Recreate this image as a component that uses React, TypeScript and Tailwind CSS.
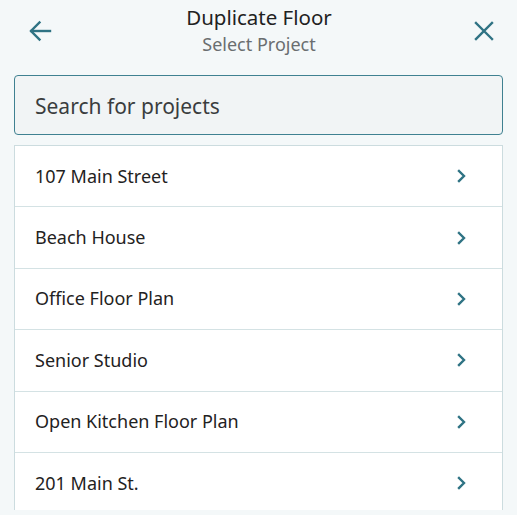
import React from "react"

const projects = [
    "107 Main Street",
    "Beach House",
    "Office Floor Plan",
    "Senior Studio",
    "Open Kitchen Floor Plan",
    "201 Main St.",
]

function BackArrow() {
    return (
        <svg width="24" height="24" viewBox="0 0 24 24" fill="none" stroke="#2f7384" strokeWidth="2.4" strokeLinecap="square">
            <path d="M22 12H3.5" />
            <path d="M11.5 3.5L3 12l8.5 8.5" />
        </svg>
    )
}

function CloseIcon() {
    return (
        <svg width="20" height="20" viewBox="0 0 20 20" fill="none" stroke="#2f7384" strokeWidth="2.4" strokeLinecap="square">
            <path d="M2 2l16 16M18 2L2 18" />
        </svg>
    )
}

function Chevron() {
    return (
        <svg width="9" height="14" viewBox="0 0 9 14" fill="none" stroke="#2f7384" strokeWidth="2.4" strokeLinecap="square">
            <path d="M2 2l5 5-5 5" />
        </svg>
    )
}

export default function App() {
    return (
        <div className="h-[515px] w-[517px] bg-[#f4f8f9] font-['Noto_Sans',sans-serif] overflow-hidden">
            {/* Header */}
            <div className="flex h-[66px] items-center justify-between pl-[28px] pr-[23px]">
                <button className="flex w-[40px] items-center -mt-[4px]">
                    <BackArrow />
                </button>
                <div className="flex flex-col items-center -mt-[6px] mr-[4px]">
                    <span className="text-[20.5px] leading-[24px] text-[#1f2222]">Duplicate Floor</span>
                    <span className="text-[18px] leading-[24px] text-[#6a6e70] mt-[3px]">Select Project</span>
                </div>
                <button className="flex w-[40px] items-center justify-end -mt-[4px]">
                    <CloseIcon />
                </button>
            </div>

            {/* Search */}
            <div className="px-[14px] pt-[9px]">
                <div className="flex h-[60px] items-center rounded-[4px] border border-[#3f8191] bg-[#f1f4f5] px-[20px] pt-[3px]">
                    <span className="text-[21px] text-[#3a3d3e]">Search for projects</span>
                </div>
            </div>

            {/* Project list */}
            <div className="mx-[14px] mt-[10px] h-[365px] overflow-hidden border border-b-0 border-[#ccdcdf] bg-white">
                {projects.map((name) => (
                    <div key={name} className="flex h-[61.4px] items-center justify-between border-b border-[#d4e2e4] pl-[20px] pr-[36px]">
                        <span className="text-[18px] text-[#1f2222]">{name}</span>
                        <Chevron />
                    </div>
                ))}
            </div>
        </div>
    )
}
